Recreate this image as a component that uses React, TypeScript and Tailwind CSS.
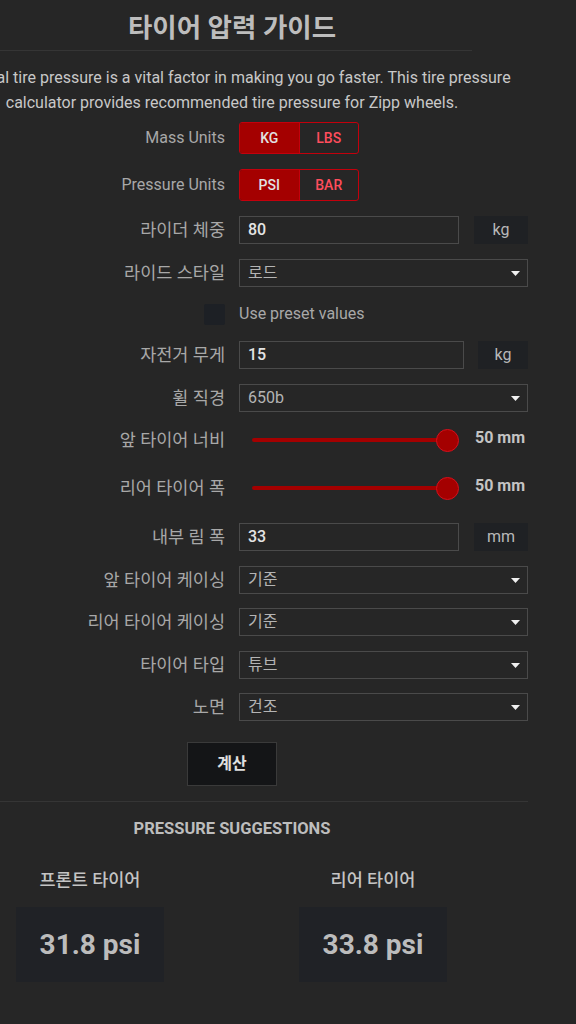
import React, { useState } from 'react';

const Caret = () => (
  <svg width="9" height="5" viewBox="0 0 9 5" className="shrink-0">
    <path d="M0 0 L9 0 L4.5 5 Z" fill="#f0f0f0" />
  </svg>
);

const isKorean = (s: React.ReactNode) => typeof s === 'string' && /[가-힣]/.test(s);

const Row: React.FC<{ label: React.ReactNode; className?: string; children: React.ReactNode }> = ({
  label,
  className = '',
  children,
}) => (
  <div className={`flex items-center gap-[14px] ${className}`}>
    <div
      className={`w-[289px] shrink-0 text-right text-[#a8a8a8] ${
        isKorean(label) ? 'text-[17.5px] leading-[24px]' : 'text-[16px] leading-[24px]'
      }`}
    >
      {label}
    </div>
    <div className="w-[289px] shrink-0">{children}</div>
  </div>
);

const Toggle: React.FC<{ options: string[]; value: string; onChange: (v: string) => void }> = ({
  options,
  value,
  onChange,
}) => (
  <div className="flex w-[120px] h-[32px] rounded-[3px] border border-[#c4000c] overflow-hidden">
    {options.map((o, i) => (
      <button
        key={o}
        type="button"
        onClick={() => onChange(o)}
        className={`flex-1 text-[14px] font-medium ${i > 0 ? 'border-l border-[#c4000c]' : ''} ${
          value === o ? 'bg-[#a40000] text-[#e2e2e2]' : 'bg-transparent text-[#ff4d5c]'
        }`}
      >
        {o}
      </button>
    ))}
  </div>
);

const Select: React.FC<{ value: string }> = ({ value }) => (
  <div className="flex items-center justify-between h-[28px] border border-[#4a4a4a] pl-[8px] pr-[7px] text-[16px] text-[#b4b4b4]">
    <span>{value}</span>
    <Caret />
  </div>
);

const NumberInput: React.FC<{ value: string; unit: string; inputW: string; unitW: string }> = ({
  value,
  unit,
  inputW,
  unitW,
}) => (
  <div className="flex items-center justify-between">
    <div className={`${inputW} h-[28px] border border-[#4a4a4a] pl-[8px] flex items-center text-[16px] text-[#e4e4e4] font-medium`}>
      {value}
    </div>
    <div className={`${unitW} h-[28px] bg-[#1f2124] flex items-center justify-center text-[16px] text-[#b8b8b8]`}>
      {unit}
    </div>
  </div>
);

const Slider: React.FC<{ value: number }> = ({ value }) => (
  <div className="flex items-center h-[28px]">
    <div className="w-[13px] shrink-0" />
    <div className="w-[195px] h-[4px] rounded-full bg-[#a40000] shrink-0" />
    <div className="w-[23px] h-[23px] rounded-full bg-[#a40000] border-[1.5px] border-[#d4101c] -ml-[11px] shrink-0" />
    <div className="ml-[16px] -mt-[4px] text-[16px] font-bold text-[#c4c4c4] whitespace-nowrap">{value} mm</div>
  </div>
);

export default function App() {
  const [mass, setMass] = useState('KG');
  const [pressure, setPressure] = useState('PSI');

  return (
    <div className="min-h-screen bg-[#262626] overflow-hidden font-[family-name:Roboto,'Noto_Sans_CJK_KR',sans-serif]">
      <div className="w-[592px] -ml-16 flex flex-col pt-[11px] pb-[40px]">
        <div className="w-[480px] mx-auto border-b border-[#353535] pb-[5px]">
          <h1 className="text-center text-[26.5px] leading-[34px] font-bold text-[#bdbdbd]">타이어 압력 가이드</h1>
        </div>

        <p className="mt-[14px] text-center text-[16px] leading-[25px] text-[#c8c8c8]">
          Optimal tire pressure is a vital factor in making you go faster. This tire pressure calculator provides
          recommended tire pressure for Zipp wheels.
        </p>

        <Row label="Mass Units" className="mt-[7px]">
          <Toggle options={['KG', 'LBS']} value={mass} onChange={setMass} />
        </Row>
        <Row label="Pressure Units" className="mt-[15px]">
          <Toggle options={['PSI', 'BAR']} value={pressure} onChange={setPressure} />
        </Row>
        <Row label="라이더 체중" className="mt-[15px]">
          <NumberInput value="80" unit="kg" inputW="w-[220px]" unitW="w-[54px]" />
        </Row>
        <Row label="라이드 스타일" className="mt-[15px]">
          <Select value="로드" />
        </Row>
        <Row
          label={
            <div className="flex justify-end">
              <div className="w-[21px] h-[21px] rounded-[2px] bg-[#1d2025]" />
            </div>
          }
          className="mt-[15px]"
        >
          <span className="text-[16px] leading-[24px] text-[#a8a8a8]">Use preset values</span>
        </Row>
        <Row label="자전거 무게" className="mt-[15px]">
          <NumberInput value="15" unit="kg" inputW="w-[225px]" unitW="w-[50px]" />
        </Row>
        <Row label="휠 직경" className="mt-[15px]">
          <Select value="650b" />
        </Row>
        <Row label="앞 타이어 너비" className="mt-[14px]">
          <Slider value={50} />
        </Row>
        <Row label="리어 타이어 폭" className="mt-[20px]">
          <Slider value={50} />
        </Row>
        <Row label="내부 림 폭" className="mt-[21px]">
          <NumberInput value="33" unit="mm" inputW="w-[220px]" unitW="w-[54px]" />
        </Row>
        <Row label="앞 타이어 케이싱" className="mt-[15px]">
          <Select value="기준" />
        </Row>
        <Row label="리어 타이어 케이싱" className="mt-[14px]">
          <Select value="기준" />
        </Row>
        <Row label="타이어 타입" className="mt-[15px]">
          <Select value="튜브" />
        </Row>
        <Row label="노면" className="mt-[14px]">
          <Select value="건조" />
        </Row>

        <div className="mt-[21px] flex justify-center">
          <button
            type="button"
            className="w-[90px] h-[44px] bg-[#141517] border border-[#3a3a3a] text-[16px] font-bold text-[#e0e0e0]"
          >
            계산
          </button>
        </div>

        <div className="mt-[15px] border-t border-[#353535]" />

        <h2 className="mt-[16px] text-center text-[16.5px] leading-[22px] font-bold text-[#bdbdbd] uppercase">
          Pressure Suggestions
        </h2>

        <div className="mt-[28px] flex pl-[80px] gap-[135px]">
          {[
            { label: '프론트 타이어', value: '31.8 psi' },
            { label: '리어 타이어', value: '33.8 psi' },
          ].map((r) => (
            <div key={r.label} className="w-[148px] flex flex-col items-center">
              <div className="text-[17.5px] leading-[24px] font-medium text-[#c4c4c4]">{r.label}</div>
              <div className="mt-[15px] w-[148px] h-[75px] bg-[#202226] flex items-center justify-center text-[28px] font-bold text-[#bcbcbc]">
                {r.value}
              </div>
            </div>
          ))}
        </div>
      </div>
    </div>
  );
}
